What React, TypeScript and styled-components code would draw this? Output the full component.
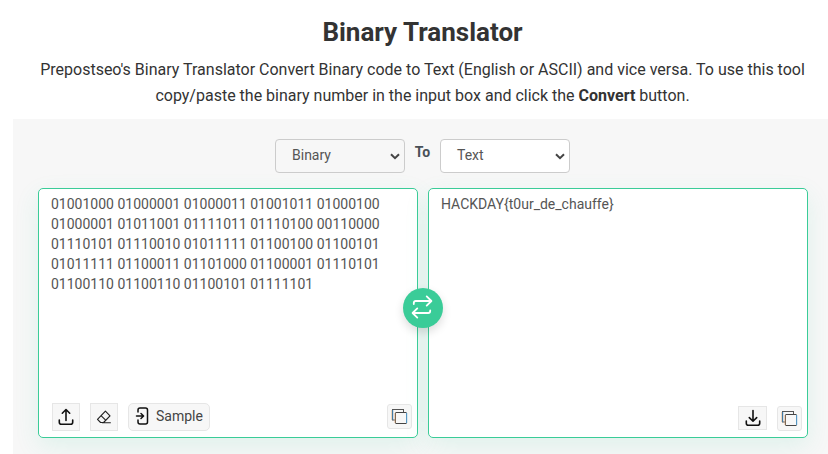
import React from "react";
import styled, { createGlobalStyle } from "styled-components";

const GlobalStyle = createGlobalStyle`
  * { box-sizing: border-box; }
  body {
    margin: 0;
    background: #fff;
    color: #333;
    font-family: Roboto, "Liberation Sans", sans-serif;
    overflow: hidden;
  }
`;

const Page = styled.main`
  height: 454px;
  padding-left: 13px;
  display: flex;
  flex-direction: column;
  overflow: hidden;
`;

const Header = styled.header`
  height: 119px;
  padding: 16px 0 0 4px;
  text-align: center;
`;

const Title = styled.h1`
  margin: 0;
  font-size: 26px;
  line-height: 32px;
  font-weight: 700;
`;

const Intro = styled.p`
  margin: 9px 0 0;
  font-size: 16px;
  line-height: 26px;
  white-space: nowrap;
`;

const Tool = styled.section`
  flex: 1;
  padding: 20px 20px 0 25px;
  background: #f7f7f7;
`;

const Controls = styled.div`
  display: flex;
  justify-content: center;
  height: 34px;
  margin-bottom: 15px;
  padding-right: 1px;
`;

const Select = styled.button<{ $muted?: boolean }>`
  display: flex;
  align-items: center;
  justify-content: space-between;
  width: 130px;
  height: 34px;
  padding: 0 4px 2px 16px;
  border: 1px solid #ccc;
  border-radius: 4px;
  background: ${(p) => (p.$muted ? "#f7f7f7" : "#fff")};
  color: #555;
  font: 400 14px Roboto, sans-serif;
`;

const Chevron = styled.svg`
  width: 10px;
  height: 7px;
  margin-top: 3px;
`;

const To = styled.span`
  width: 35px;
  padding-top: 3px;
  text-align: center;
  font-size: 14px;
  line-height: 20px;
  font-weight: 700;
  color: #495057;
`;

const Panels = styled.div`
  position: relative;
  display: grid;
  grid-template-columns: 380px 380px;
  gap: 10px;
  height: 250px;
`;

const Panel = styled.div`
  display: flex;
  flex-direction: column;
  justify-content: space-between;
  border: 1px solid #3acc98;
  border-radius: 5px;
  background: #fff;
  box-shadow: 0 8px 24px rgba(51, 204, 153, 0.12);
`;

const Content = styled.div`
  padding: 5px 12px;
  color: #555;
  font-size: 14px;
  line-height: 20px;
  white-space: pre;
`;

const Actions = styled.div<{ $output?: boolean }>`
  display: flex;
  align-items: ${(p) => (p.$output ? "flex-start" : "center")};
  gap: 10px;
  padding: ${(p) => (p.$output ? "0 5px 6px 0" : "0 5px 6px 13px")};
  justify-content: ${(p) => (p.$output ? "flex-end" : "flex-start")};
`;

const IconButton = styled.button<{ $w?: number; $h?: number }>`
  display: flex;
  align-items: center;
  justify-content: center;
  width: ${(p) => p.$w ?? 28}px;
  height: ${(p) => p.$h ?? 28}px;
  padding: 0;
  border: 1px solid #e6e6e6;
  background: #f7f7f7;
  color: #111;
`;

const CopyButton = styled(IconButton)`
  margin-left: auto;
  margin-bottom: 2px;
  border-radius: 3px;
`;

const OutputCopyButton = styled(IconButton)`
  border-radius: 3px;
`;

const SampleButton = styled(IconButton)`
  justify-content: flex-start;
  gap: 7px;
  padding: 0 0 2px 6px;
  border-radius: 5px;
  color: #444;
  font: 400 14px Roboto, sans-serif;
`;

const Swap = styled.button`
  position: absolute;
  left: 365px;
  top: 100px;
  display: flex;
  align-items: center;
  justify-content: center;
  width: 40px;
  height: 40px;
  padding: 0 2px 2px 0;
  border: 0;
  border-radius: 50%;
  background: #3acc98;
  box-shadow: 0 4px 10px rgba(0, 0, 0, 0.14);
`;

const Arrow = () => (
  <Chevron viewBox="0 0 10 7" fill="none" stroke="#444" strokeWidth="2">
    <path d="M1 1.2 5 5.2 9 1.2" />
  </Chevron>
);

const TrayIcon = ({ down }: { down?: boolean }) => (
  <svg width="18" height="18" viewBox="0 0 18 18" fill="none" stroke="#111" strokeWidth="1.6" strokeLinecap="round" strokeLinejoin="round">
    <path d="M2.3 12V14.3q0 2 2 2h9.4q2 0 2-2V12" />
    <path d={down ? "M9 1.5v10.5M5.3 8.6 9 12.2l3.7-3.6" : "M9 12.5V1.5M5.3 5.2 9 1.5l3.7 3.7"} />
  </svg>
);

const EraserIcon = () => (
  <svg width="16" height="16" viewBox="0 0 16 16" fill="none" stroke="#222" strokeWidth="1.15" strokeLinejoin="round">
    <path d="M9.4 2.2 14 6.8 7.6 13.5H4.6L1.5 10.4ZM5 6.7l4.9 4.6M6 13.7h8.8" />
  </svg>
);

const SampleIcon = () => (
  <svg width="14" height="18" viewBox="0 0 14 18" fill="none" stroke="#111" strokeWidth="1.5" strokeLinecap="round" strokeLinejoin="round">
    <path d="M3 5V3q0-2 2-2h5.5q2 0 2 2v12q0 2-2 2H5q-2 0-2-2v-2M1.5 9h7M6 6.5 8.6 9 6 11.5" />
  </svg>
);

const CopyIcon = () => (
  <svg width="17" height="17" viewBox="0 0 17 17" fill="#f7f7f7" strokeWidth="1">
    <rect x="1.5" y="1.5" width="11" height="10.5" stroke="#555" />
    <path d="M.8 2v10" stroke="#e5b27d" strokeWidth=".7" />
    <path d="M1.7 2v10" stroke="#397db0" />
    <rect x="4.5" y="4.5" width="11" height="11" rx=".5" stroke="#444" />
    <path d="M4 5v10" stroke="#dca575" strokeWidth=".8" />
    <path d="M15.7 5v10" stroke="#5ba9df" />
  </svg>
);

const SwapIcon = () => (
  <svg width="22" height="24" viewBox="0 0 22 24" fill="none" stroke="#fff" strokeWidth="1.8" strokeLinecap="round" strokeLinejoin="round">
    <path d="M2.8 9V8q0-2 2-2h15.4M15.7 1.4l4.7 4.6-4.7 4.6M19.2 15.3v.7q0 2-2 2H1.8M6.3 13.4 1.6 18l4.7 4.6" />
  </svg>
);

const binary = [
  "01001000 01000001 01000011 01001011 01000100",
  "01000001 01011001 01111011 01110100 00110000",
  "01110101 01110010 01011111 01100100 01100101",
  "01011111 01100011 01101000 01100001 01110101",
  "01100110 01100110 01100101 01111101",
].join("\n");

export default function App() {
  return (
    <>
      <GlobalStyle />
      <Page>
        <Header>
          <Title>Binary Translator</Title>
          <Intro>
            Prepostseo's Binary Translator Convert Binary code to Text (English or ASCII) and vice versa. To use this tool
            <br />
            copy/paste the binary number in the input box and click the <b>Convert</b> button.
          </Intro>
        </Header>
        <Tool>
          <Controls>
            <Select $muted>Binary<Arrow /></Select>
            <To>To</To>
            <Select>Text<Arrow /></Select>
          </Controls>
          <Panels>
            <Panel>
              <Content>{binary}</Content>
              <Actions>
                <IconButton aria-label="Upload"><TrayIcon /></IconButton>
                <IconButton aria-label="Clear"><EraserIcon /></IconButton>
                <SampleButton $w={82}><SampleIcon />Sample</SampleButton>
                <CopyButton $w={25} $h={25} aria-label="Copy input"><CopyIcon /></CopyButton>
              </Actions>
            </Panel>
            <Panel>
              <Content>{"HACKDAY{t0ur_de_chauffe}"}</Content>
              <Actions $output>
                <IconButton $w={29} $h={24} aria-label="Download"><TrayIcon down /></IconButton>
                <OutputCopyButton $w={25} $h={25} aria-label="Copy output"><CopyIcon /></OutputCopyButton>
              </Actions>
            </Panel>
            <Swap aria-label="Swap"><SwapIcon /></Swap>
          </Panels>
        </Tool>
      </Page>
    </>
  );
}
